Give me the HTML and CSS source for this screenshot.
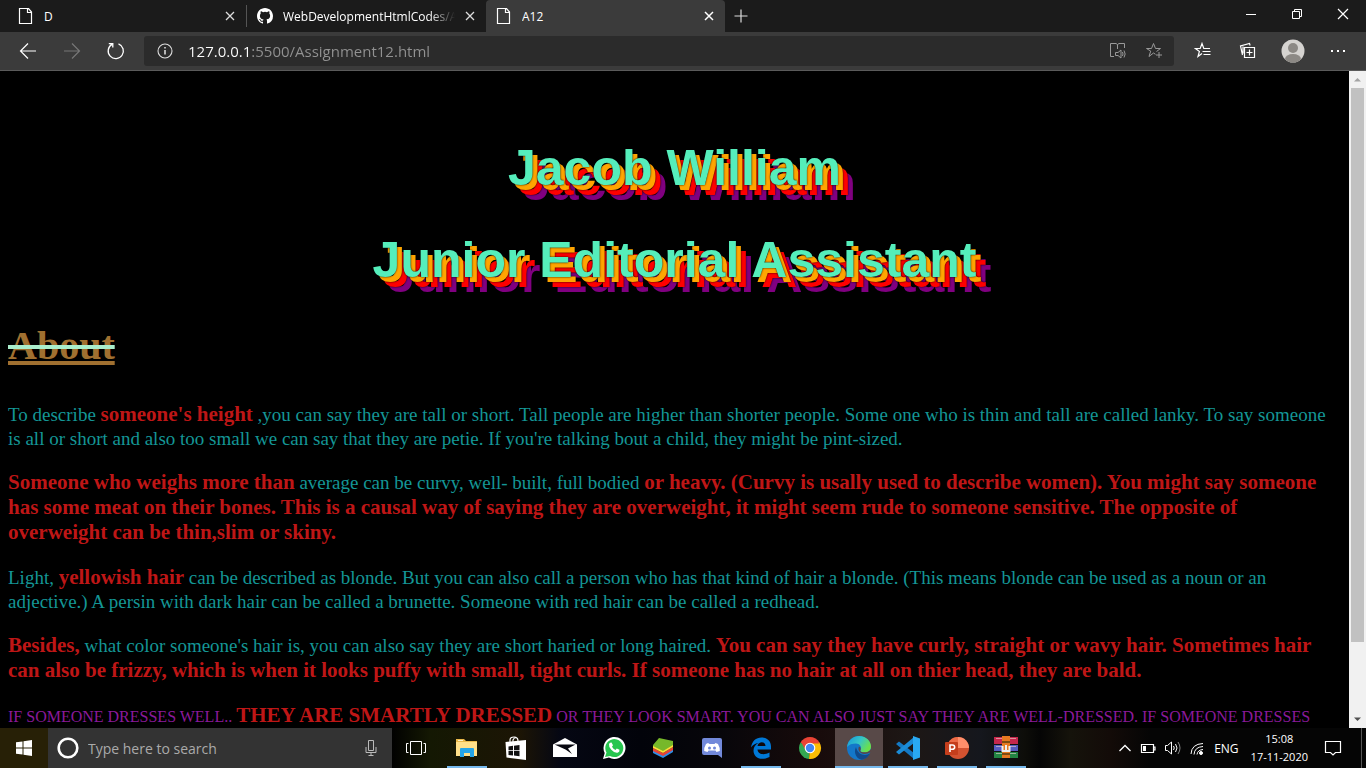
FILE: index.html
```html
<!DOCTYPE html>
<html lang="en">
<head>
<meta charset="utf-8">
<title>A12</title>
<link rel="stylesheet" href="styles.css">
</head>
<body>
<header class="browser">
  <nav class="tabs" aria-label="Tabs">
    <div class="tab divided">
      <svg class="tab-icon" viewBox="0 0 16 16" width="16" height="16"><path d="M1.500.5h9l3 3.500v11.500h-12zM9.500.5v4h4" fill="none" stroke="#fff" stroke-width="1.200"/></svg>
      <span class="tab-title">D</span>
      <button class="close" aria-label="Close tab D"><svg viewBox="0 0 10 10" width="10" height="10"><path d="M1 1l8 8M9 1l-8 8" stroke="#ddd" stroke-width="1.300"/></svg></button>
    </div>
    <div class="tab">
      <svg class="tab-icon" viewBox="0 0 16 16" width="16" height="16"><path fill="#fff" d="M8 0C3.580 0 0 3.580 0 8c0 3.540 2.290 6.530 5.470 7.590.4.070.55-.17.55-.38 0-.19-.01-.82-.01-1.490-2.010.37-2.530-.49-2.690-.94-.09-.23-.48-.94-.82-1.130-.28-.15-.68-.52-.01-.53.63-.01 1.080.58 1.230.82.72 1.210 1.870.87 2.330.66.07-.52.28-.87.51-1.070-1.780-.2-3.640-.89-3.640-3.950 0-.87.31-1.590.82-2.150-.08-.2-.36-1.020.08-2.120 0 0 .67-.21 2.200.82a7.600 7.600 0 0 1 4 0c1.530-1.040 2.200-.82 2.200-.82.44 1.100.16 1.920.08 2.120.51.56.82 1.270.82 2.150 0 3.070-1.870 3.750-3.650 3.950.29.25.54.73.54 1.480 0 1.070-.01 1.930-.01 2.200 0 .21.15.46.55.38A8 8 0 0 0 16 8c0-4.420-3.580-8-8-8z"/></svg>
      <span class="tab-title faded">WebDevelopmentHtmlCodes/Assignment</span>
      <button class="close" aria-label="Close GitHub tab"><svg viewBox="0 0 10 10" width="10" height="10"><path d="M1 1l8 8M9 1l-8 8" stroke="#ddd" stroke-width="1.300"/></svg></button>
    </div>
    <div class="tab active">
      <svg class="tab-icon" viewBox="0 0 16 16" width="16" height="16"><path d="M1.500.5h9l3 3.500v11.500h-12zM9.500.5v4h4" fill="none" stroke="#fff" stroke-width="1.200"/></svg>
      <span class="tab-title">A12</span>
      <button class="close" aria-label="Close tab A12"><svg viewBox="0 0 10 10" width="10" height="10"><path d="M1 1l8 8M9 1l-8 8" stroke="#fff" stroke-width="1.500"/></svg></button>
    </div>
    <button class="new-tab" aria-label="New tab"><svg viewBox="0 0 14 14" width="14" height="14"><path d="M7 .5v13M.5 7h13" stroke="#ddd" stroke-width="1.200"/></svg></button>
    <div class="window-buttons">
      <button aria-label="Minimize"><svg viewBox="0 0 12 12" width="12" height="12"><path d="M1 6.500h10" stroke="#fff"/></svg></button>
      <button aria-label="Restore"><svg viewBox="0 0 12 12" width="12" height="12"><path d="M1.500 3.500h7v7h-7zM3.500 3.500v-2h7v7h-2" fill="none" stroke="#fff"/></svg></button>
      <button aria-label="Close window"><svg viewBox="0 0 12 12" width="12" height="12"><path d="M1 1l10 10M11 1L1 11" stroke="#fff" stroke-width="1.200"/></svg></button>
    </div>
  </nav>
  <div class="toolbar">
    <div class="history">
      <button aria-label="Back"><svg viewBox="0 0 18 18" width="18" height="18"><path d="M17 9H1.500M9 1.500L1.500 9 9 16.500" fill="none" stroke="#fff" stroke-width="1.200"/></svg></button>
      <button aria-label="Forward"><svg viewBox="0 0 18 18" width="18" height="18"><path d="M1 9h15.500M9 1.500L16.500 9 9 16.500" fill="none" stroke="#777" stroke-width="1.200"/></svg></button>
      <button aria-label="Refresh"><svg viewBox="0 0 18 18" width="18" height="18"><path d="M11.500 1.900A7.600 7.600 0 1 1 5 2.400M1.800 1.600h4v4" fill="none" stroke="#fff" stroke-width="1.300"/></svg></button>
    </div>
    <div class="address">
      <svg viewBox="0 0 16 16" width="16" height="16"><circle cx="8" cy="8" r="7" fill="none" stroke="#ddd" stroke-width="1.100"/><path d="M8 7v4.500M8 4v1.500" stroke="#fff" stroke-width="1.300"/></svg>
      <input class="url" type="text" aria-label="Address" value="127.0.0.1:5500/Assignment12.html">
      <button aria-label="Read aloud"><svg viewBox="0 0 18 18" width="18" height="18" fill="none" stroke="#999"><path d="M5 14.500H1.500v-13H7l1.500 1L10 1.500h5.500V6M8.500 2.500V7M6.500 10.500v3H9l3 2.500V8l-3 2.500zM13.500 10q1 2 0 4M15 8.500q2.300 3.500 0 7"/></svg></button>
      <button aria-label="Add to favorites"><svg viewBox="0 0 18 18" width="18" height="18" fill="none" stroke="#999"><path d="M10.500 12.300L8.500 11 4 14.500l1.700-5.400L1.500 6.500h5L8.500 1.500l2 5h5l-4 3M11 13h6M14 10v6"/></svg></button>
    </div>
    <div class="actions">
      <button aria-label="Favorites"><svg viewBox="0 0 18 18" width="18" height="18" fill="none" stroke="#fff" stroke-width="1.200"><path d="M8 11.500l-4 3 1.400-5.100L1.500 6.500h4.700L8 1.500l1.800 5H16M8.500 9.500H16.500M9.500 12.500h7"/></svg></button>
      <button aria-label="Collections"><svg viewBox="0 0 18 18" width="18" height="18" fill="none" stroke="#fff" stroke-width="1.200"><path d="M5.500 5.500h10v10h-10zM10.500 7.500v6M7.500 10.500h6M3.500 13L1.500 4l9-2.500.6 2M4 4.500v7"/></svg></button>
      <button aria-label="Profile"><svg viewBox="0 0 24 24" width="24" height="24"><clipPath id="avatar"><circle cx="12" cy="12" r="11.500"/></clipPath><g clip-path="url(#avatar)"><path fill="#d5d3d0" d="M0 0h24v24H0z"/><circle cx="12" cy="9" r="5" fill="#8c8985"/><ellipse cx="12" cy="20" rx="8" ry="5" fill="#8c8985"/></g></svg></button>
      <button aria-label="Settings and more"><svg viewBox="0 0 16 16" width="16" height="16"><path fill="#fff" d="M1 7h2v2H1zM7 7h2v2H7zM13 7h2v2h-2z"/></svg></button>
    </div>
  </div>
</header>

<div class="viewport">
  <main class="page">
    <h1>Jacob William</h1>
    <h1>Junior Editorial Assistant</h1>
    <h2><span>About</span></h2>
    <p>To describe <strong>someone's height</strong> ,you can say they are tall or short. Tall people are higher than shorter people. Some one who is thin and tall are called lanky. To say someone is all or short and also too small we can say that they are petie. If you're talking bout a child, they might be pint-sized.</p>
    <p><strong>Someone who weighs more than</strong> average can be curvy, well- built, full bodied <strong>or heavy. (Curvy is usally used to describe women). You might say someone has some meat on their bones. This is a causal way of saying they are overweight, it might seem rude to someone sensitive. The opposite of overweight can be thin,slim or skiny.</strong></p>
    <p>Light, <strong>yellowish hair</strong> can be described as blonde. But you can also call a person who has that kind of hair a blonde. (This means blonde can be used as a noun or an adjective.) A persin with dark hair can be called a brunette. Someone with red hair can be called a redhead.</p>
    <p><strong>Besides,</strong> what color someone's hair is, you can also say they are short haried or long haired. <strong>You can say they have curly, straight or wavy hair. Sometimes hair can also be frizzy, which is when it looks puffy with small, tight curls. If someone has no hair at all on thier head, they are bald.</strong></p>
    <p class="dress">If someone dresses well.. <strong>they are smartly dressed</strong> or they look smart. You can also just say they are well-dressed. If someone dresses</p>
  </main>
  <div class="scrollbar" aria-hidden="true">
    <svg viewBox="0 0 17 17" width="17" height="17"><path d="M5 10.500L8.500 7l3.500 3.500z" fill="#a3a3a3"/></svg>
    <div class="track"><div class="thumb"></div></div>
    <svg viewBox="0 0 17 17" width="17" height="17"><path d="M5 6.500l3.500 3.500L12 6.500z" fill="#505050"/></svg>
  </div>
</div>

<footer class="taskbar">
  <button class="start" aria-label="Start"><svg viewBox="0 0 16 16" width="16" height="16"><path fill="#fff" d="M0 2.300l6.500-.9v6.100H0zM7.500 1.200L16 0v7.500H7.500zM0 8.500h6.500v6.100L0 13.700zM7.500 8.500H16V16l-8.500-1.200z"/></svg></button>
  <div class="search">
    <svg viewBox="0 0 22 22" width="22" height="22"><circle cx="11" cy="11" r="9.300" fill="none" stroke="#fff" stroke-width="2.600"/></svg>
    <input type="text" aria-label="Search" placeholder="Type here to search">
    <button aria-label="Voice search"><svg viewBox="0 0 12 18" width="12" height="18" fill="none" stroke="#bbb"><path d="M3.500 1.500h5v10h-5zM1 8v5.500h10V8M6 13.500v3M3.500 16.500h5"/></svg></button>
  </div>
  <button class="app" aria-label="Task view"><svg viewBox="0 0 24 24" width="24" height="24" fill="none" stroke="#fff"><path d="M6.500 5.500h11v13h-11zM4.500 7.500h-2v9h2M19.500 7.500h2v9h-2"/></svg></button>
  <div class="apps">
    <button class="app open" aria-label="File Explorer"><svg viewBox="0 0 24 24" width="24" height="24"><path fill="#e9b84b" d="M1 3h8l2 2h11v3H1z"/><path fill="#ffe08a" d="M1 6h21v14H1z"/><path fill="#fff3c4" d="M3 4h5v1H3z"/><path fill="#25a5e8" d="M5 21v-8q0-1 1-1h12q1 0 1 1v8h-4v-4H9v4z"/></svg></button>
    <button class="app" aria-label="Microsoft Store"><svg viewBox="0 0 24 24" width="24" height="24"><path d="M6 6V4q0-3 4-3t4 4M9 6V4q1-2.500 3-2.500Q14 2 14 5" fill="none" stroke="#fff" stroke-width="1.200"/><path fill="#fff" d="M1.500 6L22 4v20L2.500 21.500z"/><path fill="#111" d="M4.500 10.500l4.500-.7v4.400H4.500zM10 9.700l5.500-.8v5.300H10zM4.500 15H9v4.500L4.500 19zM10 15h5.500v5.300L10 19.600z"/></svg></button>
    <button class="app" aria-label="Mail"><svg viewBox="0 0 24 24" width="24" height="24"><path fill="#fff" d="M0 8.500L12 2l12 6.500V21H0z"/><path fill="#080810" d="M1.500 8.500h21L15 12.500l4 5.500-6.500-4.500z"/></svg></button>
    <button class="app" aria-label="WhatsApp"><svg viewBox="0 0 24 24" width="24" height="24"><path fill="#fff" d="M1 23l1.700-6A11 11 0 1 1 7 21.500z"/><path fill="#27c64f" d="M3 21l1.500-4.400A9 9 0 1 1 8 20z"/><path fill="#fff" d="M7 8q1-2 2.500-1.500L11 9.300l-1 1.500q1.200 2.200 3.500 3.200l1.300-1.500 2.700 1.200q.3 2.400-2 3-3 .5-6.200-3Q6.500 10.600 7 8z"/></svg></button>
    <button class="app" aria-label="BlueStacks"><svg viewBox="0 0 24 24" width="24" height="24"><path fill="#2c8ee8" d="M2 14l10 5 10-6v3l-10 6-10-5z"/><path fill="#e64335" d="M2 12l10 5 10-6v3l-10 6-10-5z"/><path fill="#ffdc35" d="M2 9l10 5 10-6v3l-10 6-10-5z"/><path fill="#76b82a" d="M2 9l6-7 14 3v4l-10 6-10-5z"/></svg></button>
    <button class="app" aria-label="Discord"><svg viewBox="0 0 24 24" width="24" height="24"><path fill="#7289da" d="M4 2h16q2 0 2 2v18l-4-3H4q-2 0-2-2V4q0-2 2-2z"/><path fill="#fff" d="M8 7l-2 1q-2.300 4-1.800 7l3.300 1 1-1.400h7l1 1.400 3.300-1q.4-3-1.800-7l-2.500-1-1 1h-5z"/><circle cx="9.500" cy="12" r="1.500" fill="#7289da"/><circle cx="14.500" cy="12" r="1.500" fill="#7289da"/></svg></button>
    <button class="app open" aria-label="Edge Legacy"><svg viewBox="0 0 24 24" width="24" height="24"><path fill="#0078d7" d="M2 11.500C3 5 7 1.500 12.500 1.500c6 0 9.500 4 9.500 9v3H8.500c.3 5 6.500 6 12 3v4.500C11 25.500 4.500 21 4.500 14.500c0-3.500 2-6.300 5-7.500C6 7.200 3.800 9 2 11.500zM8.500 10h8c0-5-7-5-8 0z"/></svg></button>
    <button class="app" aria-label="Chrome"><svg viewBox="0 0 24 24" width="24" height="24"><path fill="#ea4335" d="M12 12L2.500 6.500A11 11 0 0 1 21.500 6.500z"/><path fill="#34a853" d="M12 12l-1 11A11 11 0 0 1 2.500 6.500z"/><path fill="#fbbc05" d="M12 12V6.500h9.500A11 11 0 0 1 11 23z"/><path fill="#ea4335" d="M3 6l4 7 5-5.500h9.500L17 3z"/><circle cx="12" cy="12" r="5.300" fill="#fff"/><circle cx="12" cy="12" r="4.200" fill="#4285f4"/></svg></button>
    <button class="app open current" aria-label="Edge"><svg viewBox="0 0 24 24" width="24" height="24"><defs><linearGradient id="wave" x2="1" y2=".5"><stop stop-color="#1595dd"/><stop offset=".55" stop-color="#35c5c7"/><stop offset="1" stop-color="#6be04b"/></linearGradient></defs><circle cx="12" cy="12" r="12" fill="#1477c9"/><path fill="url(#wave)" d="M0 11C1 4 6 0 12 0c8 0 12 6 12 10.500 0 4-3 6-6 6-3.500 0-5-1-4.500-2.500 2-3-1-6.500-4.500-6.500-4 0-7 1-9 3.500z"/><path fill="#114a8b" d="M9 11c-3 6 1 12.500 6 12.700 4-.8 6.500-3.200 8-6.200-4 2.500-12 2.500-14-6.500z"/><path fill="#594747" d="M12 10.500c-1.500 3 0 7 5 7.500 2.600.2 4.500-.5 6.300-1.700.7-.3 1 0 .7.700v-4c-2 3-5 3.500-8 3.300-2.800-.3-3.200-1.300-2.500-2.300.5-1 .3-2.700-1.500-3.500z"/></svg></button>
    <button class="app open" aria-label="Visual Studio Code"><svg viewBox="0 0 24 24" width="24" height="24"><path fill="#1479c4" d="M0 8l3-2.500L18 17v6z"/><path fill="#1b8bd6" d="M0 16l3 2.500L18 7V1z"/><path fill="#29a9f2" d="M17 0l7 2.500v19L17 24z"/></svg></button>
    <button class="app open" aria-label="PowerPoint"><svg viewBox="0 0 24 24" width="24" height="24"><circle cx="13" cy="12" r="11" fill="#d35230"/><path fill="#ff8f6b" d="M13 1a11 11 0 0 1 11 11H13z"/><path fill="#ed6c47" d="M13 1v11H2A11 11 0 0 1 13 1z"/><rect y="6" width="13" height="13" rx="1" fill="#c43e1c"/><path d="M5 16V9h2.500a2 2 0 0 1 0 4.300H5" fill="none" stroke="#fff" stroke-width="1.600"/></svg></button>
    <button class="app open" aria-label="WinRAR"><svg viewBox="0 0 24 24" width="24" height="24"><path fill="#c5274c" d="M0 1h24v7H0z"/><path fill="#565bc0" d="M0 9h24v6H0z"/><path fill="#238543" d="M0 16h24v6H0z"/><path stroke="#ead6cf" d="M2 2.500h20M2 10.500h20M2 17.500h20" opacity=".6"/><path fill="#e67921" d="M8 0h8v22H8z"/><path fill="#7d4c13" d="M8 5h8v2H8zM8 17h8v2H8z"/><path fill="none" stroke="#eee" stroke-width="2" d="M8.500 10v5h7v-5M12 9v5"/></svg></button>
  </div>
  <div class="tray">
    <button aria-label="Show hidden icons"><svg viewBox="0 0 14 14" width="14" height="14"><path d="M1.500 10L7 4.500l5.500 5.500" fill="none" stroke="#fff" stroke-width="1.300"/></svg></button>
    <button aria-label="Battery"><svg viewBox="0 0 16 16" width="16" height="16"><path d="M1.500 4.500h12v8h-12zM13.500 7H15v3h-1.500" fill="none" stroke="#fff" stroke-width="1.200"/><path fill="#fff" d="M3 6h3v5H3z"/></svg></button>
    <button aria-label="Volume"><svg viewBox="0 0 18 16" width="18" height="16" fill="none" stroke="#fff"><path d="M1.500 5.500h2L7.500 2v12l-4-3.500h-2zM9.500 6q1.500 2 0 4M11.500 4q3 4 0 8"/><path stroke="#888" d="M14 2q4 6 0 12"/></svg></button>
    <button aria-label="Network"><svg viewBox="0 0 14 16" width="14" height="16" fill="none" stroke="#fff"><path d="M1 14Q1.500 4 13 3.500M4 14.500Q4.500 7 13 6.500M7 14.500Q7.500 10 13 9.500"/><circle cx="11" cy="13" r="1.500" fill="#fff"/></svg></button>
    <button class="lang">ENG</button>
    <button class="clock"><span>15:08</span><span>17-11-2020</span></button>
    <button aria-label="Notifications"><svg viewBox="0 0 18 18" width="18" height="18"><path d="M1.500 2.500h15v11h-5l-2.500 2.500-2.500-2.500h-5z" fill="none" stroke="#fff" stroke-width="1.200"/></svg></button>
    <button class="show-desktop" aria-label="Show desktop"></button>
  </div>
</footer>
</body>
</html>
```
FILE: styles.css
```css
* { box-sizing: border-box; }
html, body { height: 100%; }
body {
  margin: 0;
  display: flex;
  flex-direction: column;
  overflow: hidden;
  background: #000;
  font-family: "Open Sans", "Noto Sans", sans-serif;
  font-size: 12px;
  color: #fff;
}
button {
  display: flex;
  align-items: center;
  justify-content: center;
  padding: 0;
  border: 0;
  background: none;
  color: inherit;
  font: inherit;
}
input {
  min-width: 0;
  flex: 1;
  padding: 0;
  border: 0;
  outline: 0;
  background: none;
  font: inherit;
}
svg { display: block; flex: none; }

/* Browser frame */
.browser { flex: none; background: #3b3b3b; border-bottom: 1px solid #5a5a5a; }
.tabs { display: flex; height: 32px; background: #1b1b1b; }
.tab {
  display: flex;
  align-items: center;
  flex: 0 1 239px;
  min-width: 0;
  gap: 10px;
  padding: 0 11px 0 10px;
}
.tab.divided {
  flex-basis: 247px;
  padding: 0 11px 0 18px;
  border-right: 1px solid #555;
  border-image: linear-gradient(#1b1b1b 6px, #555 6px 26px, #1b1b1b 26px) 1;
}
.tab.active { background: #3b3b3b; border-radius: 4px 4px 0 0; }
.tab-title { flex: 1; min-width: 0; overflow: hidden; white-space: nowrap; }
.faded { mask-image: linear-gradient(90deg, #000 85%, transparent); }
.close { width: 10px; height: 16px; }
.new-tab { width: 32px; }
.window-buttons { display: flex; margin-left: auto; }
.window-buttons button { width: 46px; padding-bottom: 4px; }
.toolbar { display: flex; align-items: center; height: 38px; }
.history { display: flex; padding: 0 6px; }
.history button { width: 44px; height: 36px; }
.address {
  display: flex;
  align-items: center;
  flex: 1;
  height: 30px;
  gap: 18px;
  padding: 0 11px 0 13px;
  border-radius: 3px;
  background: #2b2b2b;
}
.url {
  margin-left: -3px;
  font-size: 15px;
  color: transparent;
  background: linear-gradient(90deg, #fff 62px, #929292 62px);
  background-clip: text;
}
.actions { display: flex; padding: 0 6px; }
.actions button { width: 45px; height: 36px; }

/* Web page */
.viewport { display: flex; flex: 1; min-height: 0; }
.page {
  flex: 1;
  min-width: 0;
  padding: 34px 8px 0;
  overflow: hidden;
  font-family: "Liberation Serif", "Times New Roman", serif;
  font-size: 19px;
  line-height: 23px;
  color: #149696;
}
h1 {
  margin: 34px 0;
  font: bold 50px/58px "Liberation Sans", Arial, sans-serif;
  text-align: center;
  color: #55eebb;
  text-shadow: 0 0 2px #000, 5px 5px 0 orange, 5px 5px 2px #000, 10px 10px 0 red, 10px 10px 2px #000, 15px 15px 0 purple;
}
h2 {
  margin: 33px 0;
  font-size: 40px;
  line-height: 46px;
  color: #a07030;
  text-decoration: underline 4px;
}
h2 span { text-decoration: line-through 4px #aaeecc; }
p { margin: 20px 0; }
strong { font-size: 21px; line-height: 25px; color: #be1616; }
.dress { font-size: 16px; line-height: 20px; text-transform: uppercase; color: #8b1a9b; }
.scrollbar { display: flex; flex-direction: column; width: 17px; background: #f1f1f1; }
.track { flex: 1; padding: 0 2px; }
.thumb { height: 89%; background: #c1c1c1; }

/* Taskbar */
.taskbar {
  display: flex;
  flex: none;
  height: 40px;
  background: linear-gradient(90deg, #000 390px, #141803 430px, #1c1505 520px, #050713 560px, #02030a 640px, #07060a 720px, #180b0b 820px, #1d1715 910px, #15171d 980px, #0d0d09 1025px, #050505 1040px, #15130b 1070px, #130b08 1110px, #050505 1150px);
}
.start { width: 48px; background: #272006; }
.search {
  display: flex;
  align-items: center;
  width: 344px;
  gap: 9px;
  padding: 0 15px 0 9px;
  background: #333;
}
.search input { font-size: 14px; color: #fff; }
.search input::placeholder { color: #aaa; opacity: 1; }
.app { width: 48px; height: 40px; border: solid transparent; border-width: 2px 0; }
.apps { display: flex; gap: 1px; padding-left: 3px; }
.open { border-image: linear-gradient(90deg, transparent 4px, #76b9ed 4px 44px, transparent 44px) 0 0 2; }
.current { background: #584948; border-image: none; border-top-color: #584948; border-bottom-color: #76b9ed; }
.tray { display: flex; align-items: center; gap: 8px; margin-left: auto; }
.tray button { height: 40px; }
.lang { padding: 0 4px 0 2px; }
.tray .clock { flex-direction: column; margin-right: 8px; font-size: 11px; line-height: 18px; }
.tray .show-desktop { width: 5px; margin-left: 11px; border-left: 1px solid #555; }
```
